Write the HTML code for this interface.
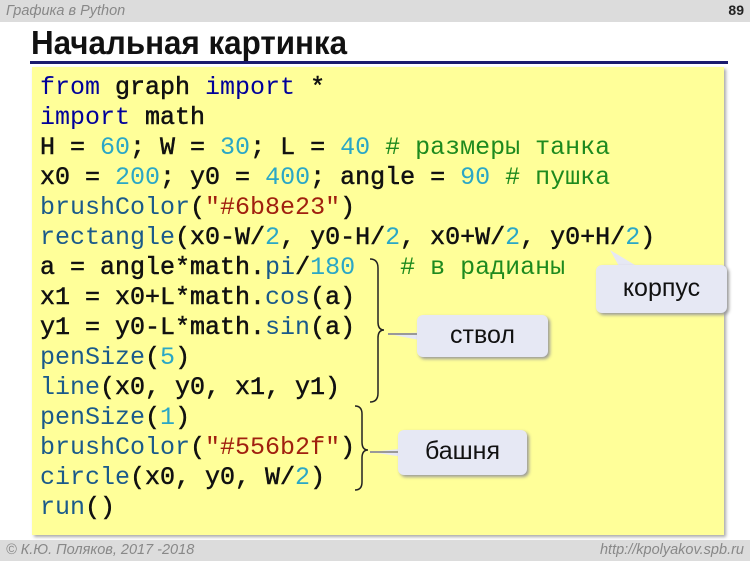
<!DOCTYPE html>
<html><head><meta charset="utf-8"><style>
body{margin:0;width:750px;height:561px;background:#fff;position:relative;overflow:hidden;font-family:"Liberation Sans",sans-serif}
.hdr{position:absolute;left:0;top:0;width:750px;height:22px;background:#dcdcdc}
.hdr .l{position:absolute;left:6px;top:3px;font-size:14.5px;font-style:italic;color:#888}
.hdr .r{position:absolute;right:6px;top:2px;font-size:14px;font-weight:bold;color:#222}
.title{position:absolute;left:31px;top:24px;font-size:33px;font-weight:bold;color:#111;transform:scaleX(.95);transform-origin:left}
.line{position:absolute;left:30px;top:61px;width:698px;height:3px;background:#1a1a6e}
.box{position:absolute;left:32px;top:67px;width:692px;height:468px;background:#ffff99;box-shadow:2px 2px 3px #aaa}
pre{position:absolute;left:40px;top:73px;margin:0;font-family:"Liberation Mono",monospace;font-size:25px;line-height:30px;color:#111;-webkit-text-stroke:0.5px #111}
.k{color:#00009a;-webkit-text-stroke:0}.f{color:#1a5a8a;-webkit-text-stroke:0}.n{color:#2ba7c6;-webkit-text-stroke:0}.c{color:#1e8a1e;-webkit-text-stroke:0}.s{color:#a0200f;-webkit-text-stroke:0}
.ftr{position:absolute;left:0;top:540px;width:750px;height:21px;background:#dcdcdc;font-size:14.5px;font-style:italic;color:#888}
.call{position:absolute;background:#e6e8f4;border-radius:6px;box-shadow:2px 2px 3px #999;font-size:25px;color:#111;text-align:center}
</style></head><body>
<div class="hdr"><span class="l">Графика в Python</span><span class="r">89</span></div>
<div class="title">Начальная картинка</div>
<div class="line"></div>
<div class="box"></div>
<pre><span class="k">from</span> graph <span class="k">import</span> *
<span class="k">import</span> math
H = <span class="n">60</span>; W = <span class="n">30</span>; L = <span class="n">40</span> <span class="c"># размеры танка</span>
x0 = <span class="n">200</span>; y0 = <span class="n">400</span>; angle = <span class="n">90</span> <span class="c"># пушка</span>
<span class="f">brushColor</span>(<span class="s">"#6b8e23"</span>)
<span class="f">rectangle</span>(x0-W/<span class="n">2</span>, y0-H/<span class="n">2</span>, x0+W/<span class="n">2</span>, y0+H/<span class="n">2</span>)
a = angle*math.<span class="f">pi</span>/<span class="n">180</span>   <span class="c"># в радианы</span>
x1 = x0+L*math.<span class="f">cos</span>(a)
y1 = y0-L*math.<span class="f">sin</span>(a)
<span class="f">penSize</span>(<span class="n">5</span>)
<span class="f">line</span>(x0, y0, x1, y1)
<span class="f">penSize</span>(<span class="n">1</span>)
<span class="f">brushColor</span>(<span class="s">"#556b2f"</span>)
<span class="f">circle</span>(x0, y0, W/<span class="n">2</span>)
<span class="f">run</span>()</pre>
<svg style="position:absolute;left:0;top:0" width="750" height="561">
<path d="M370 259 Q378 259 378 268 L378 322 Q378 330 384 330 Q378 330 378 338 L378 393 Q378 402 370 402" fill="none" stroke="#222" stroke-width="1.5"/>
<path d="M355 406 Q362 406 362 414 L362 442 Q362 450 368 450 Q362 450 362 458 L362 482 Q362 490 355 490" fill="none" stroke="#222" stroke-width="1.5"/>
<path d="M388 334 L430 332 L430 342 Z" fill="#e6e8f4"/>
<line x1="388" y1="334" x2="420" y2="334" stroke="#999" stroke-width="2"/>
<path d="M370 452 L410 448 L410 458 Z" fill="#e6e8f4"/>
<line x1="370" y1="452" x2="405" y2="452" stroke="#999" stroke-width="2"/>
<path d="M610 250 L640 268 L620 268 Z" fill="#e6e8f4"/>
</svg>
<div class="call" style="left:596px;top:265px;width:131px;height:48px;line-height:46px">корпус</div>
<div class="call" style="left:417px;top:315px;width:131px;height:42px;line-height:40px">ствол</div>
<div class="call" style="left:398px;top:430px;width:129px;height:45px;line-height:43px">башня</div>
<div class="ftr"><span style="position:absolute;left:6px;top:2px">© К.Ю. Поляков, 2017 -2018</span><span style="position:absolute;right:6px;top:2px">http://kpolyakov.spb.ru</span></div>
</body></html>
